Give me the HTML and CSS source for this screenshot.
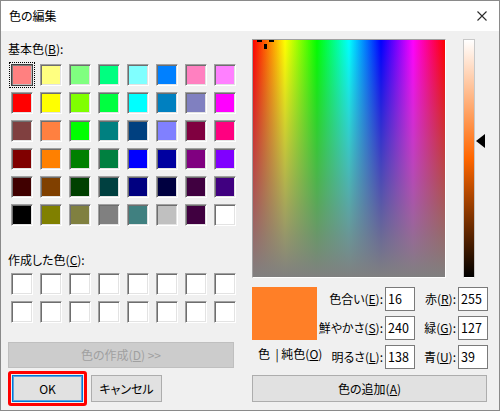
FILE: index.html
```html
<!DOCTYPE html>
<html lang="ja">
<head>
<meta charset="utf-8">
<title>色の編集</title>
<link rel="stylesheet" href="styles.css">
</head>
<body>
<div class="window">
  <div class="titlebar">
    <span class="title">色の編集</span>
    <span class="close"><svg width="10" height="10" viewBox="0 0 10 10"><path d="M0.5 0.5L9.5 9.5M9.5 0.5L0.5 9.5" stroke="#2b2b2b" stroke-width="1.1" fill="none"/></svg></span>
  </div>
  <div class="content">
    <div class="left">
      <div class="label first">基本色(<u>B</u>):</div>
      <div class="grid">
        <span class="sw sel" style="background:#ff8080"></span>
        <span class="sw" style="background:#ffff80"></span>
        <span class="sw" style="background:#80ff80"></span>
        <span class="sw" style="background:#00ff80"></span>
        <span class="sw" style="background:#80ffff"></span>
        <span class="sw" style="background:#0080ff"></span>
        <span class="sw" style="background:#ff80c0"></span>
        <span class="sw" style="background:#ff80ff"></span>

        <span class="sw" style="background:#ff0000"></span>
        <span class="sw" style="background:#ffff00"></span>
        <span class="sw" style="background:#80ff00"></span>
        <span class="sw" style="background:#00ff40"></span>
        <span class="sw" style="background:#00ffff"></span>
        <span class="sw" style="background:#0080c0"></span>
        <span class="sw" style="background:#8080c0"></span>
        <span class="sw" style="background:#ff00ff"></span>

        <span class="sw" style="background:#804040"></span>
        <span class="sw" style="background:#ff8040"></span>
        <span class="sw" style="background:#00ff00"></span>
        <span class="sw" style="background:#008080"></span>
        <span class="sw" style="background:#004080"></span>
        <span class="sw" style="background:#8080ff"></span>
        <span class="sw" style="background:#800040"></span>
        <span class="sw" style="background:#ff0080"></span>

        <span class="sw" style="background:#800000"></span>
        <span class="sw" style="background:#ff8000"></span>
        <span class="sw" style="background:#008000"></span>
        <span class="sw" style="background:#008040"></span>
        <span class="sw" style="background:#0000ff"></span>
        <span class="sw" style="background:#0000a0"></span>
        <span class="sw" style="background:#800080"></span>
        <span class="sw" style="background:#8000ff"></span>

        <span class="sw" style="background:#400000"></span>
        <span class="sw" style="background:#804000"></span>
        <span class="sw" style="background:#004000"></span>
        <span class="sw" style="background:#004040"></span>
        <span class="sw" style="background:#000080"></span>
        <span class="sw" style="background:#000040"></span>
        <span class="sw" style="background:#400040"></span>
        <span class="sw" style="background:#400080"></span>

        <span class="sw" style="background:#000000"></span>
        <span class="sw" style="background:#808000"></span>
        <span class="sw" style="background:#808040"></span>
        <span class="sw" style="background:#808080"></span>
        <span class="sw" style="background:#408080"></span>
        <span class="sw" style="background:#c0c0c0"></span>
        <span class="sw" style="background:#400040"></span>
        <span class="sw" style="background:#ffffff"></span>
      </div>
      <div class="label second">作成した色(<u>C</u>):</div>
      <div class="grid custom">
        <span class="sw"></span><span class="sw"></span><span class="sw"></span><span class="sw"></span>
        <span class="sw"></span><span class="sw"></span><span class="sw"></span><span class="sw"></span>
        <span class="sw"></span><span class="sw"></span><span class="sw"></span><span class="sw"></span>
        <span class="sw"></span><span class="sw"></span><span class="sw"></span><span class="sw"></span>
      </div>
      <div class="btn wide disabled">色の作成(<u>D</u>) &gt;&gt;</div>
      <div class="btnrow">
        <div class="highlight"><div class="btn ok">OK</div></div>
        <div class="btn">キャンセル</div>
      </div>
    </div>
    <div class="right">
      <div class="picker">
        <div class="spectrum">
          <span class="cross cross-l"></span>
          <span class="cross cross-r"></span>
          <span class="cross cross-v"></span>
        </div>
        <div class="lum"></div>
        <div class="arrow"></div>
      </div>
      <div class="fields">
        <div class="preview"></div>
        <div class="pure">色&nbsp; |&nbsp;純色(<u>O</u>)</div>
        <div class="flabel r1 c2">色合い(<u>E</u>):</div>
        <div class="field r1 c3">16</div>
        <div class="flabel r1 c4">赤(<u>R</u>):</div>
        <div class="field r1 c5">255</div>
        <div class="flabel r2 c2">鮮やかさ(<u>S</u>):</div>
        <div class="field r2 c3">240</div>
        <div class="flabel r2 c4">緑(<u>G</u>):</div>
        <div class="field r2 c5">127</div>
        <div class="flabel r3 c2">明るさ(<u>L</u>):</div>
        <div class="field r3 c3">138</div>
        <div class="flabel r3 c4">青(<u>U</u>):</div>
        <div class="field r3 c5">39</div>
      </div>
      <div class="btn add">色の追加(<u>A</u>)</div>
    </div>
  </div>
</div>
</body>
</html>
```
FILE: styles.css
```css
* { box-sizing: border-box; }
html, body { margin: 0; padding: 0; background: #ffffff; }
body {
  width: 500px;
  height: 412px;
  overflow: hidden;
  font-family: "Noto Sans CJK JP", "Noto Sans", sans-serif;
  font-size: 12px;
  color: #000;
  font-feature-settings: "palt";
}
u { text-underline-offset: 1px; }

.window {
  width: 500px;
  height: 411px;
  border: 1px solid #8a8a8a;
  background: #f0f0f0;
  display: flex;
  flex-direction: column;
}
.titlebar {
  height: 30px;
  flex: none;
  background: #fff;
  display: flex;
  align-items: center;
  padding-left: 8px;
}
.title { font-size: 12px; line-height: 14px; }
.close { margin-left: auto; margin-right: 12px; display: flex; }

.content { flex: 1; display: flex; }
.left { width: 251px; padding-left: 7px; display: flex; flex-direction: column; align-items: flex-start; }
.label { line-height: 14px; height: 14px; white-space: nowrap; }
.label.first { margin-top: 11px; }
.label.second { margin-top: 27px; }

.grid {
  margin-left: 3px;
  margin-top: 8px;
  display: grid;
  grid-template-columns: repeat(8, 22px);
  grid-auto-rows: 22px;
  column-gap: 7px;
  row-gap: 6px;
}
.grid.custom { margin-top: 6px; }
.sw {
  display: block;
  border: 1px solid;
  border-color: #a0a0a0 #ffffff #ffffff #a0a0a0;
  box-shadow: inset 1px 1px 0 #6e6e6e, inset -1px -1px 0 #e3e3e3;
}
.custom .sw { background: #fff; }
.sw.sel {
  border-color: #404040;
  box-shadow: inset 1px 1px 0 #7a7a7a, inset -1px -1px 0 #bdbdbd;
  outline: 1px dotted #000;
  outline-offset: 1px;
}

.btn {
  width: 71px;
  height: 27px;
  background: #e1e1e1;
  border: 1px solid #adadad;
  display: flex;
  align-items: center;
  justify-content: center;
  white-space: nowrap;
  line-height: 14px;
}
.btn.wide {
  width: 226px;
  height: 26px;
  margin-top: 19px;
  background: #cccccc;
  border-color: #bfbfbf;
  color: #a0a0a0;
}
.btnrow { margin-top: 3px; display: flex; align-items: center; gap: 4px; }
.highlight { border: 3px solid #ff0000; border-radius: 3px; padding: 1px; }
.btn.ok { border-color: #0078d7; box-shadow: inset 0 0 0 1px #5aa2e0; }

.right { width: 247px; display: flex; flex-direction: column; align-items: flex-start; }
.picker { margin-top: 8px; display: flex; align-items: flex-start; height: 239px; }
.spectrum {
  position: relative;
  width: 194px;
  height: 239px;
  border: 1px solid;
  border-color: #a0a0a0 #ffffff #ffffff #a0a0a0;
  background:
    linear-gradient(to bottom, rgba(128,128,128,0), #808080),
    linear-gradient(to right, #ff0000, #ffff00, #00ff00, #00ffff, #0000ff, #ff00ff, #ff0000);
}
.cross { position: absolute; background: #000; }
.cross-l { left: 4px; top: 0; width: 5px; height: 2px; }
.cross-r { left: 16px; top: 0; width: 5px; height: 2px; }
.cross-v { left: 11px; top: 4px; width: 3px; height: 5px; }

.lum {
  margin-left: 17px;
  width: 12px;
  height: 239px;
  border: 1px solid #c8c8c8;
  border-bottom-color: #ffffff;
  background: linear-gradient(to bottom, #ffffff, #ff6600 50%, #000000);
}
.arrow {
  margin-left: 1px;
  margin-top: 95px;
  width: 0;
  height: 0;
  border-top: 7px solid transparent;
  border-bottom: 7px solid transparent;
  border-right: 9px solid #000;
}

.fields {
  margin-top: 9px;
  display: grid;
  grid-template-columns: 65px 68px 30px 43px 30px;
  grid-template-rows: 24px 24px 24px;
  row-gap: 5px;
}
.preview { grid-column: 1; grid-row: 1 / 3; background: #ff7f27; }
.pure { grid-column: 1; grid-row: 3; white-space: nowrap; padding-left: 6px; line-height: 14px; margin-top: 2px; }
.r1 { grid-row: 1; } .r2 { grid-row: 2; } .r3 { grid-row: 3; }
.c2 { grid-column: 2; } .c3 { grid-column: 3; } .c4 { grid-column: 4; } .c5 { grid-column: 5; }
.flabel { text-align: right; padding-right: 2px; line-height: 24px; white-space: nowrap; }
.field {
  background: #fff;
  border: 1px solid #7a7a7a;
  padding-left: 2px;
  line-height: 21px;
  font-size: 12.5px;
}

.btn.add { width: 235px; margin-top: 6px; }
```
